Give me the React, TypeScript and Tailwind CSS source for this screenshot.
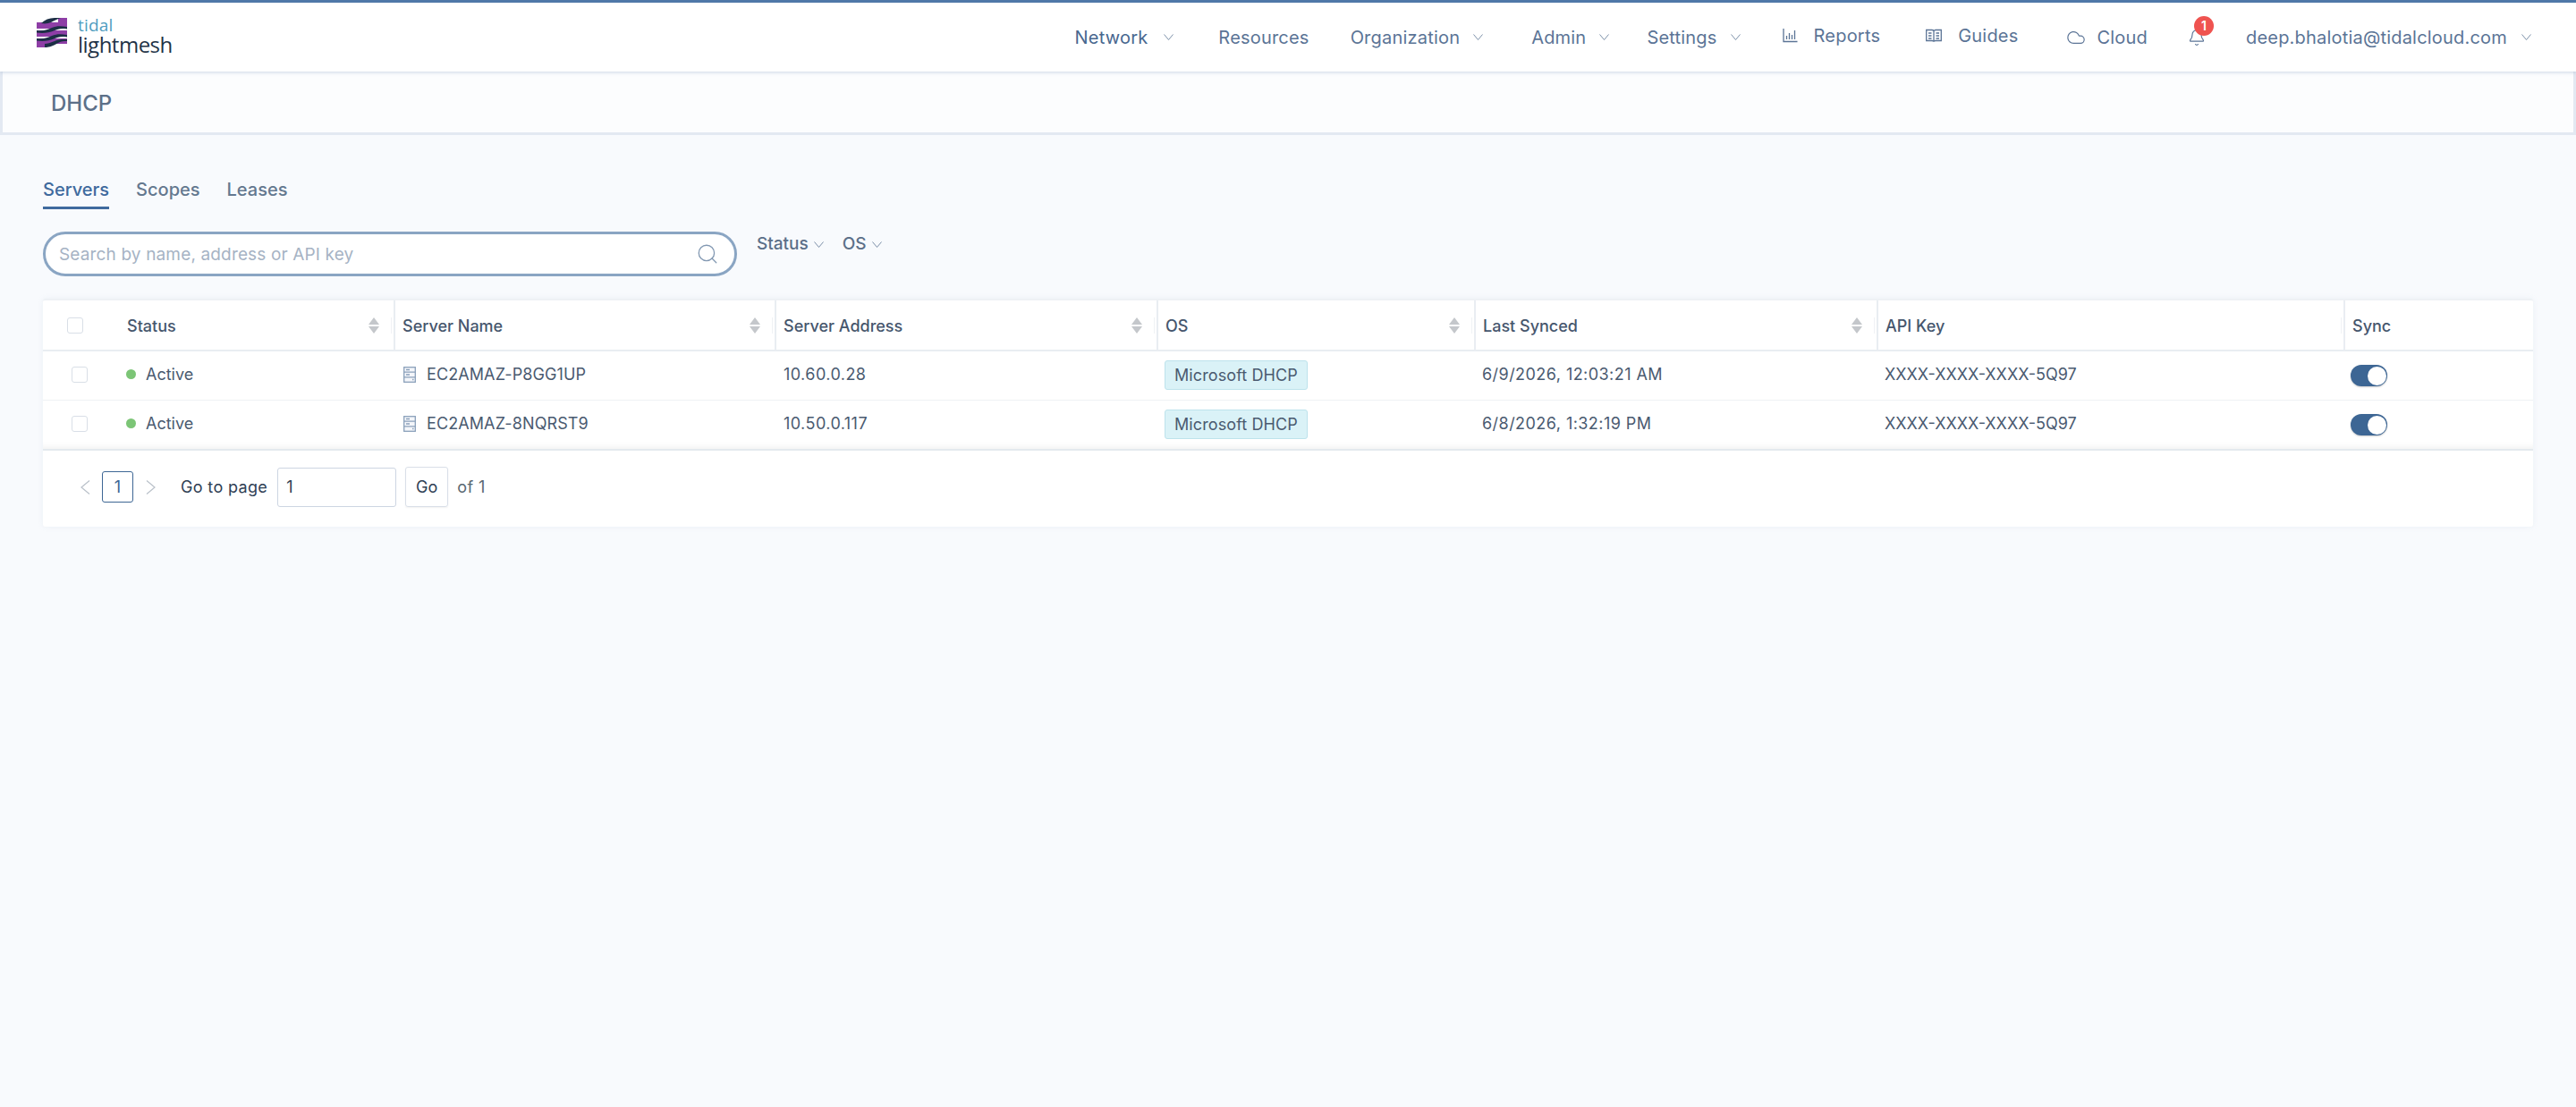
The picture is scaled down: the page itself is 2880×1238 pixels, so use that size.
import { Bell, Cloud, Search } from "lucide-react";

const FONT = "font-['Inter','Liberation_Sans',sans-serif]";

function Chevron({ className = "" }: { className?: string }) {
  return (
    <svg width="11" height="7" viewBox="0 0 11 7" fill="none" stroke="currentColor" strokeWidth="1" className={className}>
      <path d="M0.5 0.5 5.5 6.5 10.5 0.5" />
    </svg>
  );
}

function Logo() {
  return (
    <div className="flex items-start">
      <svg width="34" height="33" viewBox="0 0 34 33" className="mt-[17px] ml-[41px]">
        <path d="M0 5h34v7H0zM0 14h34v7H0zM0 23h34v6H0z" fill="#8e3ea6" />
        <path d="M24 0h10v6H24zM0 27h12v6H0z" fill="#8e3ea6" />
        <path d="M5 6C9 2 14 0 20 0h7c-4 1-7 3-11 5-3 1-6 2-11 1z" fill="#1c2f45" />
        <path d="M0 14c8 1 12-1 17-3s10-2 17-1v2.500c-7-1-10 0-15 2s-11 3-19 2z" fill="#1c2f45" />
        <path d="M0 23c8 1 12-1 17-3s10-2 17-1v2.500c-7-1-10 0-15 2s-11 3-19 2z" fill="#1c2f45" />
        <path d="M9 33c7 0 11-3 15-5s6-2 10-2v-2c-7 0-9 0-14 2s-8 3-11 3z" fill="#1c2f45" />
      </svg>
      <div className="ml-[12px] mt-[15px] flex flex-col font-['Open_Sans',sans-serif]">
        <div className="text-[19px] leading-[20px] text-[#4f9dbf]">tidal</div>
        <div className="text-[24px] leading-[24px] tracking-[-0.5px] text-[#1f3347]">lightmesh</div>
      </div>
    </div>
  );
}

function ReportsIcon() {
  return (
    <svg width="17" height="17" viewBox="0 0 17 17" fill="none" stroke="currentColor" strokeWidth="1.300">
      <path d="M1 1v14.500h15.500" />
      <path d="M4.500 13V9M7.500 13V6M10.500 13V8M13.500 13V3" />
    </svg>
  );
}

function GuidesIcon() {
  return (
    <svg width="18" height="16" viewBox="0 0 18 16" fill="none" stroke="currentColor" strokeWidth="1.300">
      <path d="M.7 1.500h6.200c1 0 2.100.6 2.100 1.600 0-1 1.100-1.600 2.100-1.600h6.200v12H11c-1 0-2 .5-2 1.300 0-.8-1-1.300-2-1.300H.7z" />
      <path d="M9 3v11M3 5h3.500M3 8h3.500M3 11h3.500M11.500 5H15M11.500 8H15M11.500 11H15" />
    </svg>
  );
}

function ServerIcon() {
  return (
    <svg width="14" height="18" viewBox="0 0 14 18" fill="#f4f6fa" stroke="#8aa0ba" strokeWidth="1.300">
      <rect x="0.700" y="0.700" width="12.600" height="16.600" />
      <path d="M.7 6.200h12.600M.7 11.800h12.600M3 3.500h4M3 9h4M10 14.500h1.500" />
    </svg>
  );
}

function SortIcon() {
  return (
    <svg width="12" height="18" viewBox="0 0 12 18" fill="#c4c7cb">
      <path d="M6 0 12 8H0zM0 10h12L6 18z" />
    </svg>
  );
}

function NavItem({ label, left, chevron, dark }: { label: string; left: string; chevron?: string; dark?: boolean }) {
  return (
    <div className={`flex items-center ${left} ${dark ? "text-[#48678f]" : "text-[#5b7496]"}`}>
      <span>{label}</span>
      {chevron ? <Chevron className={`${chevron} text-[#7c8fa8]`} /> : null}
    </div>
  );
}

function TopBar() {
  return (
    <header className="h-[80px] border-t-[3px] border-[#4f78a8] bg-white flex text-[20px] tracking-[0.2px] relative z-10 shadow-[0_1px_4px_rgba(130,155,190,0.4)]">
      <Logo />
      <nav className="flex items-center ml-auto pr-[50px]">
        <NavItem label="Network" left="" chevron="ml-[18px]" dark />
        <NavItem label="Resources" left="ml-[50px]" />
        <NavItem label="Organization" left="ml-[46px]" chevron="ml-[15px]" />
        <NavItem label="Admin" left="ml-[54px]" chevron="ml-[15px]" />
        <NavItem label="Settings" left="ml-[42px]" chevron="ml-[15px]" />
        <div className="flex items-center ml-[47px] text-[#5b7496] mb-[4px]">
          <ReportsIcon />
          <span className="ml-[18px]">Reports</span>
        </div>
        <div className="flex items-center ml-[51px] text-[#5b7496] mb-[4px]">
          <GuidesIcon />
          <span className="ml-[18px]">Guides</span>
        </div>
        <div className="flex items-center ml-[54px] text-[#5b7496]">
          <Cloud size={22} strokeWidth={1.300} />
          <span className="ml-[12px]">Cloud</span>
        </div>
        <div className="relative ml-[45px] text-[#5b7496]">
          <Bell size={20} strokeWidth={1.400} />
          <span className="absolute left-[7px] top-[-14px] flex h-[22px] w-[22px] items-center justify-center rounded-full bg-[#ef5350] text-[14px] font-semibold text-white">
            1
          </span>
        </div>
        <span className="ml-[45px] text-[#5b7496]">deep.bhalotia@tidalcloud.com</span>
        <Chevron className="ml-[16px] text-[#7c8fa8]" />
      </nav>
    </header>
  );
}

function TitleBand() {
  return (
    <div className="h-[71px] flex items-center bg-[#fcfdfe] pl-[57px] pt-[3px] text-[24px] font-medium text-[#5c7089] border-l-[3px] border-r-[3px] border-b-[3px] border-[#e3e9f2]">
      <span className="-ml-[3px]">DHCP</span>
    </div>
  );
}

function Tabs() {
  return (
    <div className="flex gap-[30px] text-[20px] font-medium pt-[46px] h-[83px]">
      <div className="h-full border-b-[3px] border-[#3f6a9e] text-[#3f6a9e]">Servers</div>
      <div className="text-[#64788f]">Scopes</div>
      <div className="text-[#64788f]">Leases</div>
    </div>
  );
}

function Filters() {
  return (
    <div className="flex items-start mt-[25px] text-[19px] font-medium text-[#5c7089]">
      <div className="flex h-[50px] w-[776px] items-center rounded-[25px] border-[3px] border-[#8aa5c3] bg-white pl-[15px] pr-[17px]">
        <span className="flex-1 pt-[2px] text-[#a6b3c4] font-normal tracking-[0.15px]">Search by name, address or API key</span>
        <Search size={26} strokeWidth={1.200} className="text-[#8298b2]" />
      </div>
      <div className="ml-[22px] flex items-center">
        <span>Status</span>
        <Chevron className="ml-[6px] text-[#7c8fa8]" />
      </div>
      <div className="ml-[21px] flex items-center">
        <span>OS</span>
        <Chevron className="ml-[6px] text-[#7c8fa8]" />
      </div>
    </div>
  );
}

const GRID = "grid grid-cols-[392px_426px_427px_355px_450px_522px_212px]";

function Checkbox({ className = "" }: { className?: string }) {
  return <span className={`block h-[18px] w-[18px] rounded-[3px] border border-[#d9dfe7] bg-white ${className}`} />;
}

function HeadCell({ label, sort, first }: { label: string; sort?: boolean; first?: boolean }) {
  return (
    <div className={`flex h-full items-center pl-[8px] pr-[2px] ${first ? "" : "border-l-2 border-[#e9edf2]"}`}>
      <span className="flex-1 pt-[2px]">{label}</span>
      {sort ? <SortIcon /> : null}
      {label !== "Sync" ? <span className="ml-[13px] h-[18px] w-px bg-[#f0f2f5]" /> : null}
    </div>
  );
}

function Row({ name, address, synced, last }: { name: string; address: string; synced: string; last?: boolean }) {
  return (
    <div className={`${GRID} items-center text-[18px] text-[#4a5a70] ${last ? "h-[54px] shadow-[inset_0_-9px_8px_-8px_rgba(0,0,0,0.07)]" : "h-[55px] border-b border-[#eef1f4]"}`}>
      <div className="flex items-center -mt-[3px]">
        <Checkbox className="ml-[32px]" />
        <span className="ml-[43px] h-[11px] w-[11px] rounded-full bg-[#7cc576]" />
        <span className="ml-[11px]">Active</span>
      </div>
      <div className="flex items-center pl-[11px] -mt-[3px]">
        <ServerIcon />
        <span className="ml-[12px] tracking-[0.1px]">{name}</span>
      </div>
      <div className="pl-[10px] -mt-[3px] tracking-[0.45px]">{address}</div>
      <div className="pl-[9px] -mt-[1px]">
        <span className="inline-block h-[33px] rounded-[3px] border border-[#bde3ec] bg-[#daf2f7] px-[10px] leading-[31px] tracking-[0.1px]">Microsoft DHCP</span>
      </div>
      <div className="pl-[9px] -mt-[3px] tracking-[0.45px]">{synced}</div>
      <div className="pl-[9px] -mt-[3px]">XXXX-XXXX-XXXX-5Q97</div>
      <div className="pl-[8px]">
        <span className="flex h-[24px] w-[41px] items-center justify-end rounded-full bg-[#3d6694] pr-[1px] shadow-[0_1px_2px_rgba(0,0,0,0.2)]">
          <span className="h-[21px] w-[21px] rounded-full bg-white" />
        </span>
      </div>
    </div>
  );
}

function PageFooter() {
  return (
    <div className="flex h-[87px] items-center border-t-[2px] border-[#e4e9ee] text-[18px] pb-[4px]">
      <svg width="11" height="16" viewBox="0 0 11 16" fill="none" stroke="#b9c0c9" strokeWidth="1.200" className="ml-[42px]">
        <path d="M10 .5 1 8l9 7.500" />
      </svg>
      <span className="ml-[13px] flex h-[35px] w-[35px] items-center justify-center rounded-[3px] border border-[#3d6694] text-[#3d6694]">1</span>
      <svg width="11" height="16" viewBox="0 0 11 16" fill="none" stroke="#b9c0c9" strokeWidth="1.200" className="ml-[14px]">
        <path d="M1 .5 10 8l-9 7.500" />
      </svg>
      <span className="ml-[28px] tracking-[0.35px] text-[#2f4054]">Go to page</span>
      <div className="ml-[11px] flex h-[44px] w-[133px] items-center rounded-[3px] border border-[#cdd5e2] pl-[9px] text-[#2f4054]">1</div>
      <div className="ml-[10px] flex h-[45px] w-[48px] items-center justify-center rounded-[3px] border border-[#d9dfe8] text-[#2f4054] shadow-[0_1px_2px_rgba(0,0,0,0.06)]">Go</div>
      <span className="ml-[10px] tracking-[0.4px] text-[#5a6872]">of 1</span>
    </div>
  );
}

function ServersTable() {
  return (
    <div className="mt-[25px] bg-white rounded-[3px] border-t-2 border-[#eef1f5] shadow-[0_0_6px_rgba(150,170,200,0.12)]">
      <div className={`${GRID} h-[57px] items-center border-b-2 border-[#e9edf2] text-[18px] font-medium text-[#46566d]`}>
        <div className="flex h-full items-center pr-[2px]">
          <Checkbox className="ml-[27px]" />
          <span className="ml-[49px] flex-1 pt-[2px]">Status</span>
          <SortIcon />
          <span className="ml-[13px] h-[18px] w-px bg-[#f0f2f5]" />
        </div>
        <HeadCell label="Server Name" sort />
        <HeadCell label="Server Address" sort />
        <HeadCell label="OS" sort />
        <HeadCell label="Last Synced" sort />
        <HeadCell label="API Key" />
        <HeadCell label="Sync" />
      </div>
      <Row name="EC2AMAZ-P8GG1UP" address="10.60.0.28" synced="6/9/2026, 12:03:21 AM" />
      <Row name="EC2AMAZ-8NQRST9" address="10.50.0.117" synced="6/8/2026, 1:32:19 PM" last />
      <PageFooter />
    </div>
  );
}

export default function App() {
  return (
    <div className={`${FONT} min-h-screen bg-[#f8fafd]`}>
      <TopBar />
      <TitleBand />
      <main className="px-[48px]">
        <Tabs />
        <Filters />
        <ServersTable />
      </main>
    </div>
  );
}
